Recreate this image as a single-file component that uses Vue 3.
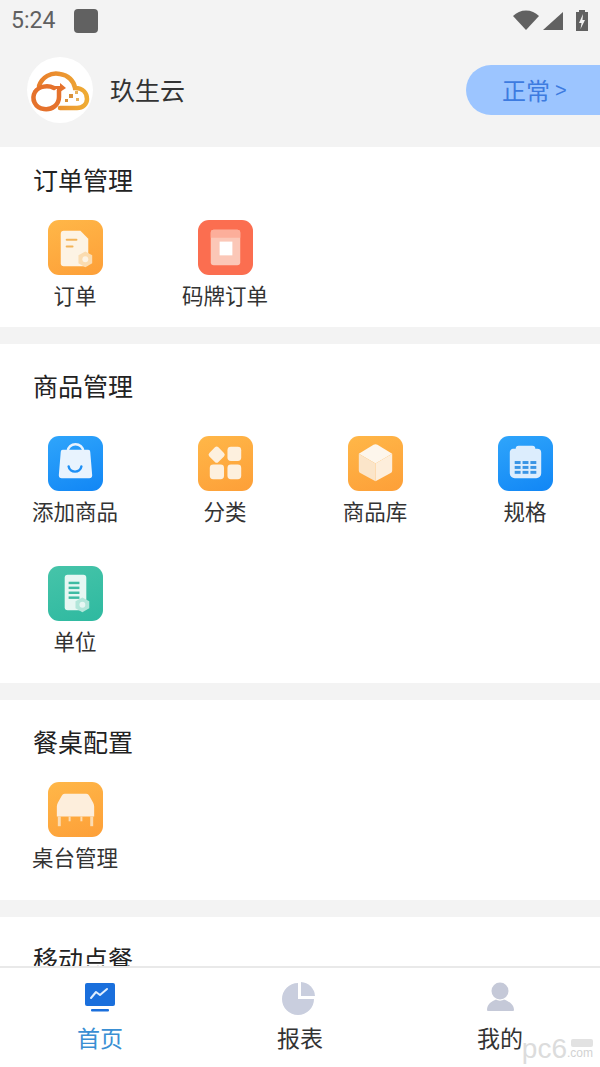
<template>
  <div class="phone">
    <div class="status-bar">
      <span class="time">5:24</span>
      <span class="notice"></span>
      <svg class="status-icons" width="76" height="24" viewBox="0 0 76 24">
        <path d="M0 7C3.500 3.500 8 1.500 13 1.500S22.500 3.500 26 7L13 21Z" fill="#616161" />
        <path d="M30 21L50 3V21Z" fill="#616161" />
        <path d="M63 3h3V1h6v2h3v19H63Z" fill="#616161" />
        <path d="M70 5l-4 9h2.500l-1 6 4.500-9h-2.500Z" fill="#f3f3f3" />
      </svg>
    </div>

    <header class="shop-bar">
      <div class="avatar">
        <svg width="66" height="66" viewBox="0 0 66 66" fill="none">
          <defs>
            <linearGradient id="cloudLine" x1="0" y1="0" x2="1" y2="0">
              <stop offset="0" stop-color="#e87f2c" />
              <stop offset="1" stop-color="#efac34" />
            </linearGradient>
          </defs>
          <path d="M12 29C15 20 24 15 33 17C41 18 47 24 48 31C56 31 60 36 60 42C60 47 56 51 50 51H33" stroke="url(#cloudLine)" stroke-width="4.500" stroke-linecap="round" />
          <path d="M27 31C21 28 12 29 8 35C4 42 8 51 17 52C25 53 32 48 32 40V33" stroke="#e5722c" stroke-width="4.500" stroke-linecap="round" />
          <path d="M26 29H33V26L39 31L33 35V32H26Z" fill="#e5722c" />
          <rect x="42" y="37" width="4" height="4" fill="#d9913a" />
          <rect x="48" y="34" width="3" height="3" fill="#e8b25d" />
          <rect x="49" y="41" width="3" height="3" fill="#e8b25d" />
          <rect x="38" y="42" width="3" height="3" fill="#d9913a" />
        </svg>
      </div>
      <span class="shop-name">玖生云</span>
      <div class="state-pill">正常<span class="state-arrow">&gt;</span></div>
    </header>

    <main class="content">
      <section v-for="sec in sections" :key="sec.title" class="block" :class="sec.cls">
        <h3 class="block-title">{{ sec.title }}</h3>
        <div class="grid">
          <div v-for="item in sec.items" :key="item.name" class="cell">
            <div class="tile" :class="item.tone">
              <svg width="55" height="55" viewBox="0 0 56 56">
                <g v-if="item.icon === 'order'">
                  <path d="M16 11H33L41 19V44A3 3 0 0 1 38 47H16A3 3 0 0 1 13 44V14A3 3 0 0 1 16 11Z" fill="#fdf3e4" />
                  <rect x="18" y="19" width="12" height="2" rx="1" fill="#f3b458" />
                  <rect x="18" y="26" width="8" height="2" rx="1" fill="#f3b458" />
                  <path d="M38 32L45 36V44L38 48L31 44V36Z" fill="#fbdcb0" />
                  <circle cx="38" cy="40" r="3" fill="#fdf3e4" />
                </g>
                <g v-else-if="item.icon === 'board'">
                  <rect x="13" y="10" width="30" height="36" rx="3" fill="#fbc7b7" />
                  <path d="M16 10H40A3 3 0 0 1 43 13V18H13V13A3 3 0 0 1 16 10Z" fill="#fcae9a" />
                  <rect x="22" y="22" width="13" height="14" fill="#fff" />
                </g>
                <g v-else-if="item.icon === 'bag'">
                  <path d="M20 16C20 6 36 6 36 16" fill="none" stroke="#e8f3fe" stroke-width="2.500" />
                  <path d="M15 14H41A2 2 0 0 1 43 16L45 40A3 3 0 0 1 42 43H14A3 3 0 0 1 11 40L13 16A2 2 0 0 1 15 14Z" fill="#e8f3fe" />
                  <path d="M21 31C22 38 33 38 34 31" fill="none" stroke="#1e90f6" stroke-width="2.500" stroke-linecap="round" />
                </g>
                <g v-else-if="item.icon === 'kinds'">
                  <rect x="12.500" y="12.500" width="13" height="13" rx="2.500" transform="rotate(45 19 19)" fill="#fdf0de" />
                  <rect x="30" y="11" width="14" height="14.500" rx="3.500" fill="#fdf0de" />
                  <rect x="12" y="29" width="14.500" height="15" rx="3.500" fill="#fdf0de" />
                  <rect x="30" y="29" width="14" height="15" rx="3.500" fill="#fdf0de" />
                </g>
                <g v-else-if="item.icon === 'cube'">
                  <path d="M26 9Q28 8 30 9L45 18L28 28L11 18Z" fill="#fdf6ec" />
                  <path d="M11 18L28 28V46L13 38A3 3 0 0 1 11 35Z" fill="#fbe5c9" />
                  <path d="M45 18L28 28V46L43 38A3 3 0 0 0 45 35Z" fill="#fdeedb" />
                </g>
                <g v-else-if="item.icon === 'spec'">
                  <path d="M15 13H18A3 3 0 0 1 21 10H35A3 3 0 0 1 38 13H40A4 4 0 0 1 44 17V38A5 5 0 0 1 39 43H17A5 5 0 0 1 12 38V17A4 4 0 0 1 15 13Z" fill="#dcedfd" />
                  <g fill="#3a95e5">
                    <rect x="17" y="25.500" width="6" height="3" /><rect x="25" y="25.500" width="6" height="3" /><rect x="33" y="25.500" width="6" height="3" />
                    <rect x="17" y="30.500" width="6" height="3" /><rect x="25" y="30.500" width="6" height="3" /><rect x="33" y="30.500" width="6" height="3" />
                    <rect x="17" y="35.500" width="6" height="3" /><rect x="25" y="35.500" width="6" height="3" /><rect x="33" y="35.500" width="6" height="3" />
                  </g>
                </g>
                <g v-else-if="item.icon === 'unit'">
                  <rect x="17" y="9" width="22" height="36" rx="3" fill="#e6f7f3" />
                  <g fill="#3fbba3">
                    <rect x="21" y="16" width="11" height="2.500" /><rect x="21" y="21" width="11" height="2.500" /><rect x="21" y="26" width="11" height="2.500" /><rect x="21" y="31" width="11" height="2.500" />
                  </g>
                  <path d="M35 32L42 36V43L35 47L28 43V36Z" fill="#b2e6da" />
                  <circle cx="35" cy="39.500" r="3" fill="#e6f7f3" />
                </g>
                <g v-else-if="item.icon === 'table'">
                  <path d="M17 12H39Q41 12 42 14L46 21Q47 23 47 25V35H9V25Q9 23 10 21L14 14Q15 12 17 12Z" fill="#fdeedc" />
                  <rect x="10" y="35" width="3" height="10" fill="#fcdcb2" />
                  <rect x="43" y="35" width="3" height="10" fill="#fcdcb2" />
                  <rect x="21" y="35" width="2" height="5" fill="#fcdcb2" />
                  <rect x="33" y="35" width="2" height="5" fill="#fcdcb2" />
                </g>
              </svg>
            </div>
            <span class="cell-name">{{ item.name }}</span>
          </div>
        </div>
      </section>
    </main>

    <nav class="tabbar">
      <div v-for="tab in tabs" :key="tab.name" class="tab" :class="{ on: tab.on }">
        <svg width="36" height="36" viewBox="0 0 36 36">
          <g v-if="tab.name === '首页'">
            <rect x="3" y="3" width="30" height="23" rx="2" fill="#1a6fdc" />
            <path d="M9 18L14 12L18 15L25 9" fill="none" stroke="#dfeeff" stroke-width="2" stroke-linecap="round" stroke-linejoin="round" />
            <rect x="9" y="29" width="18" height="2.500" rx="1" fill="#1a6fdc" />
          </g>
          <g v-else-if="tab.name === '报表'">
            <path d="M16 3V19H32A16 16 0 1 1 16 3Z" fill="#c9cede" />
            <path d="M19 2A15 15 0 0 1 33 16H19Z" fill="#c9cede" />
          </g>
          <g v-else>
            <circle cx="18" cy="11" r="8.500" fill="#c5c9d8" />
            <path d="M5 30C5 24 10 21 14 19.500C16 21 20 21 22 19.500C26 21 32 24 32 30A1 1 0 0 1 31 31H6A1 1 0 0 1 5 30Z" fill="#c5c9d8" />
          </g>
        </svg>
        <span class="tab-name">{{ tab.name }}</span>
      </div>
      <div class="mark">
        <span class="mark-main">pc6</span>
        <span class="mark-side">
          <i class="mark-badge"></i>
          <span class="mark-sub">.com</span>
        </span>
      </div>
    </nav>
  </div>
</template>

<script setup>
const sections = [
  {
    title: '订单管理',
    cls: 'first',
    items: [
      { name: '订单', icon: 'order', tone: 'orange' },
      { name: '码牌订单', icon: 'board', tone: 'red' }
    ]
  },
  {
    title: '商品管理',
    cls: 'goods',
    items: [
      { name: '添加商品', icon: 'bag', tone: 'blue' },
      { name: '分类', icon: 'kinds', tone: 'orange' },
      { name: '商品库', icon: 'cube', tone: 'orange' },
      { name: '规格', icon: 'spec', tone: 'blue' },
      { name: '单位', icon: 'unit', tone: 'teal' }
    ]
  },
  {
    title: '餐桌配置',
    cls: 'tables',
    items: [{ name: '桌台管理', icon: 'table', tone: 'orange' }]
  },
  { title: '移动点餐', cls: 'mobile', items: [] }
]

const tabs = [
  { name: '首页', on: true },
  { name: '报表', on: false },
  { name: '我的', on: false }
]
</script>

<style>
html,
body {
  margin: 0;
  background: #f3f3f3;
}
</style>

<style scoped>
.phone {
  position: relative;
  display: flex;
  flex-direction: column;
  width: 600px;
  height: 1067px;
  overflow: hidden;
  background: #f3f3f3;
  font-family: "Liberation Sans", "Noto Sans CJK SC", sans-serif;
}
.status-bar {
  display: flex;
  align-items: center;
  flex: none;
  height: 41px;
  padding: 0 11px;
  box-sizing: border-box;
}
.time {
  width: 63px;
  font-family: Roboto, sans-serif;
  font-size: 23px;
  color: #606060;
}
.notice {
  width: 24px;
  height: 24px;
  border-radius: 4px;
  background: #616161;
}
.status-icons {
  margin-left: auto;
}
.shop-bar {
  display: flex;
  align-items: center;
  flex: none;
  height: 106px;
  padding: 0 0 8px 27px;
  box-sizing: border-box;
}
.avatar {
  width: 66px;
  height: 66px;
  border-radius: 50%;
  background: #fff;
}
.shop-name {
  margin: -3px 0 0 17px;
  font-size: 25px;
  color: #333;
}
.state-pill {
  display: flex;
  align-items: center;
  width: 134px;
  height: 50px;
  margin-left: auto;
  padding: 0 0 2px 36px;
  box-sizing: border-box;
  border-radius: 25px 0 0 25px;
  background: #9cc5ff;
  font-size: 24px;
  color: #3d7be0;
}
.state-arrow {
  margin: 2px 0 0 5px;
  font-size: 20px;
}
.content {
  flex: 1;
  min-height: 0;
  overflow: hidden;
}
.block {
  margin-bottom: 17px;
  background: #fff;
}
.first {
  height: 180px;
  padding-top: 17px;
  box-sizing: border-box;
}
.goods {
  height: 339px;
  padding-top: 26px;
  box-sizing: border-box;
}
.tables {
  height: 200px;
  padding-top: 26px;
  box-sizing: border-box;
}
.mobile {
  height: 120px;
  padding-top: 26px;
  box-sizing: border-box;
}
.block-title {
  margin: 0;
  padding-left: 33px;
  font-size: 25px;
  font-weight: 400;
  line-height: 34px;
  color: #222;
}
.grid {
  display: grid;
  grid-template-columns: repeat(4, 150px);
  grid-auto-rows: 130px;
}
.first .grid {
  margin-top: 22px;
}
.goods .grid {
  margin-top: 32px;
}
.tables .grid {
  margin-top: 22px;
}
.cell {
  display: flex;
  flex-direction: column;
  align-items: center;
}
.tile {
  width: 55px;
  height: 55px;
  margin-left: 1px;
  border-radius: 11px;
}
.tile svg {
  display: block;
}
.orange {
  background: linear-gradient(160deg, #ffb748, #fd9f38);
}
.red {
  background: #fb6e50;
}
.blue {
  background: linear-gradient(160deg, #2fa5fb, #1186f5);
}
.teal {
  background: linear-gradient(160deg, #46c4a9, #2eb9a0);
}
.cell-name {
  margin-top: 7px;
  font-size: 21.500px;
  line-height: 30px;
  color: #333;
  white-space: nowrap;
}
.tabbar {
  position: relative;
  display: grid;
  grid-template-columns: 200px 200px 200px;
  flex: none;
  height: 101px;
  box-sizing: border-box;
  border-top: 2px solid #e9e9e9;
  background: #fff;
}
.tab {
  display: flex;
  flex-direction: column;
  align-items: center;
  padding-top: 12px;
}
.tab svg {
  display: block;
}
.tab-name {
  margin-top: 7px;
  font-size: 23px;
  line-height: 32px;
  color: #333;
}
.tab.on .tab-name {
  color: #3a8fd3;
}
.mark {
  position: absolute;
  right: 7px;
  bottom: 4px;
  display: flex;
  align-items: flex-end;
  font-family: "Liberation Sans", sans-serif;
  color: #dcdcdc;
}
.mark-main {
  font-size: 28px;
  line-height: 28px;
}
.mark-side {
  display: flex;
  flex-direction: column;
  align-items: flex-end;
  margin-bottom: 3px;
}
.mark-badge {
  width: 22px;
  height: 8px;
  border-radius: 2px;
  background: #e2e2e2;
}
.mark-sub {
  font-size: 12px;
  line-height: 13px;
  color: #d2d2d2;
}
</style>
